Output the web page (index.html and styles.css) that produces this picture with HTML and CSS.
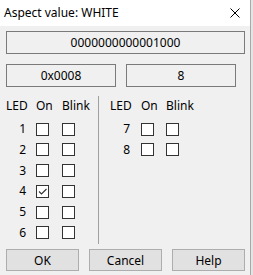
FILE: index.html
```html
<!DOCTYPE html>
<html lang="en">
<head>
    <meta charset="UTF-8">
    <link rel="stylesheet" href="styles.css">
    <title>Aspect value</title>
</head>
<body>
    <div class="screen">
        <div class="dialogo">
            <div class="barraTitulo">
                <span class="titulo">Aspect value: WHITE</span>
                <svg class="cerrar" width="10" height="10" viewBox="0 0 10 10">
                    <path d="M0.5 0.5 L9.5 9.5 M9.5 0.5 L0.5 9.5" stroke="#000" stroke-width="1" fill="none"/>
                </svg>
            </div>

            <div class="contenido">
                <div class="caja binario">0000000000001000</div>

                <div class="filaCajas">
                    <div class="caja hex">0x0008</div>
                    <div class="caja dec">8</div>
                </div>

                <div class="columnas">
                    <!-- LEDs 1 a 6 -->
                    <div class="tablaLed izquierda">
                        <span class="cab num">LED</span><span class="cab">On</span><span class="cab">Blink</span>
                        <span class="num">1</span><span class="check"></span><span class="check"></span>
                        <span class="num">2</span><span class="check"></span><span class="check"></span>
                        <span class="num">3</span><span class="check"></span><span class="check"></span>
                        <span class="num">4</span><span class="check marcado"><svg width="11" height="11" viewBox="0 0 11 11"><path d="M2 5.5 L4.5 8 L9.5 3" stroke="#333" stroke-width="1.1" fill="none"/></svg></span><span class="check"></span>
                        <span class="num">5</span><span class="check"></span><span class="check"></span>
                        <span class="num">6</span><span class="check"></span><span class="check"></span>
                    </div>

                    <div class="separador"></div>

                    <!-- LEDs 7 y 8 -->
                    <div class="tablaLed derecha">
                        <span class="cab num">LED</span><span class="cab">On</span><span class="cab">Blink</span>
                        <span class="num">7</span><span class="check"></span><span class="check"></span>
                        <span class="num">8</span><span class="check"></span><span class="check"></span>
                    </div>
                </div>

                <div class="botones">
                    <button type="button" class="boton">OK</button>
                    <button type="button" class="boton">Cancel</button>
                    <button type="button" class="boton">Help</button>
                </div>
            </div>
        </div>
        <div class="fondo"></div>
    </div>
</body>
</html>
```

FILE: styles.css
```css
body {
    margin: 0;
    font-family: "Noto Sans", sans-serif;
    font-size: 12px;
    color: #000;
    background-color: #f0f0f0;
}

.screen {
    display: flex;
    width: 253px;
    height: 275px;
}

.dialogo {
    width: 250px;
    height: 275px;
    background-color: #f0f0f0;
    display: flex;
    flex-direction: column;
}

.fondo {
    flex: 1;
    background-color: #e4e4e4;
    border-left: 1px solid #a8a8a8;
}

.barraTitulo {
    height: 26px;
    background-color: #fff;
    display: flex;
    align-items: center;
    padding-left: 4px;
}

.titulo {
    flex: 1;
    line-height: 16px;
}

.cerrar {
    margin-right: 10px;
}

.contenido {
    padding: 5px 5px 0 6px;
    display: flex;
    flex-direction: column;
}

.caja {
    height: 21px;
    border: 1px solid #7a7a7a;
    text-align: center;
    line-height: 21px;
    box-sizing: content-box;
}

.binario {
    width: 237px;
}

.filaCajas {
    display: flex;
    gap: 10px;
    margin-top: 10px;
}

.hex,
.dec {
    width: 108px;
}

.columnas {
    display: flex;
    margin-top: 9px;
    height: 148px;
}

.tablaLed {
    display: grid;
    grid-auto-rows: 20.75px;
    align-items: center;
    align-content: start;
    padding-top: 2px;
}

.izquierda {
    grid-template-columns: 30px 26px 28px;
}

.derecha {
    grid-template-columns: 31px 25px 28px;
}

.tablaLed > span:nth-child(-n+3) {
    margin-bottom: 5px;
}

.cab {
    line-height: 16px;
}

.num {
    text-align: right;
    padding-right: 10px;
    line-height: 16px;
}

.derecha .num {
    padding-right: 11px;
}

.tablaLed .cab.num {
    text-align: left;
    padding-right: 0;
}

.check {
    width: 11px;
    height: 11px;
    border: 1px solid #333;
    background-color: #fff;
    display: flex;
}

.separador {
    width: 1px;
    background-color: #a0a0a0;
    margin: 0 11px 0 8px;
}

.botones {
    display: flex;
    gap: 10px;
    margin-top: 5px;
}

.boton {
    width: 73px;
    height: 22px;
    background-color: #e1e1e1;
    border: 1px solid #adadad;
    font-family: "Noto Sans", sans-serif;
    font-size: 12px;
    padding: 0;
    color: #000;
}
```
